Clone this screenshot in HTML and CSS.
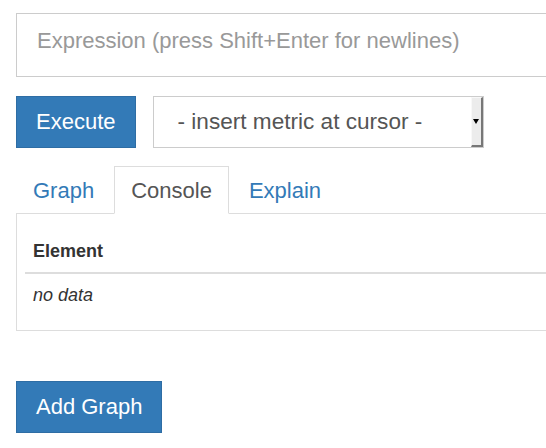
FILE: index.html
```html
<!DOCTYPE html>
<html>
<head>
<meta charset="utf-8">
<link rel="stylesheet" href="styles.css">
</head>
<body>
<div class="page">
  <div class="expr">Expression (press Shift+Enter for newlines)</div>
  <div class="controls">
    <button class="btn">Execute</button>
    <div class="select">
      <span class="select-text">- insert metric at cursor -</span>
      <span class="select-arrow"><span class="caret"></span></span>
    </div>
  </div>
  <div class="tabs">
    <span class="tab">Graph</span>
    <span class="tab active">Console</span>
    <span class="tab">Explain</span>
  </div>
  <div class="panel">
    <table class="table">
      <thead><tr><th>Element</th></tr></thead>
      <tbody><tr><td><em>no data</em></td></tr></tbody>
    </table>
  </div>
  <div class="footer">
    <button class="btn">Add Graph</button>
  </div>
</div>
</body>
</html>
```
FILE: styles.css
```css
html, body {
  margin: 0;
  padding: 0;
  background: #fff;
  overflow: hidden;
}
body {
  width: 546px;
  height: 448px;
  font-family: "Liberation Sans", Arial, sans-serif;
  color: #333;
}
.page {
  padding: 13px 0 0 16px;
  width: 540px;
}
.expr {
  box-sizing: border-box;
  width: 540px;
  height: 64px;
  border: 1px solid #ccc;
  border-right: 0;
  padding: 15px 0 0 20px;
  font-size: 22px;
  line-height: 24px;
  color: #999;
  white-space: nowrap;
}
.controls {
  display: flex;
  gap: 17px;
  margin-top: 19px;
  height: 52px;
}
.btn {
  box-sizing: border-box;
  height: 52px;
  background: #337ab7;
  border: 1px solid #2e6da4;
  color: #fff;
  font-family: "Liberation Sans", Arial, sans-serif;
  font-size: 22px;
  padding: 0 19px;
  margin: 0;
  border-radius: 0;
}
.select {
  box-sizing: border-box;
  width: 331px;
  height: 52px;
  border: 1px solid #ccc;
  display: flex;
  align-items: stretch;
}
.select-text {
  flex: 1;
  padding-left: 24px;
  font-size: 22.6px;
  line-height: 50px;
  color: #555;
  white-space: nowrap;
}
.select-arrow {
  box-sizing: border-box;
  width: 12px;
  background: #ececec;
  border-left: 1px solid #f8f8f8;
  border-top: 1px solid #f8f8f8;
  border-right: 2px solid #777;
  border-bottom: 2px solid #777;
  display: flex;
  align-items: center;
  justify-content: center;
}
.caret {
  width: 0;
  height: 0;
  border-left: 3px solid transparent;
  border-right: 3px solid transparent;
  border-top: 5px solid #000;
}
.tabs {
  display: flex;
  margin-top: 18px;
  height: 48px;
}
.tab {
  box-sizing: border-box;
  height: 48px;
  padding: 0 16px;
  margin-right: 3px;
  border: 1px solid transparent;
  font-size: 22px;
  line-height: 48px;
  color: #337ab7;
}
.tab.active {
  color: #555;
  border-color: #ddd;
  border-bottom-color: #fff;
  background: #fff;
  position: relative;
  z-index: 1;
}
.panel {
  box-sizing: border-box;
  margin-top: -1px;
  width: 530px;
  height: 118px;
  border: 1px solid #ddd;
  border-right: 0;
  padding: 16px 0 0 8px;
}
.table {
  width: 100%;
  border-collapse: collapse;
  font-size: 18px;
}
.table th {
  text-align: left;
  font-weight: bold;
  padding: 8px;
  line-height: 26px;
  border-bottom: 2px solid #ddd;
}
.table td {
  padding: 8px;
  line-height: 26px;
}
.footer {
  margin-top: 50px;
}
```
